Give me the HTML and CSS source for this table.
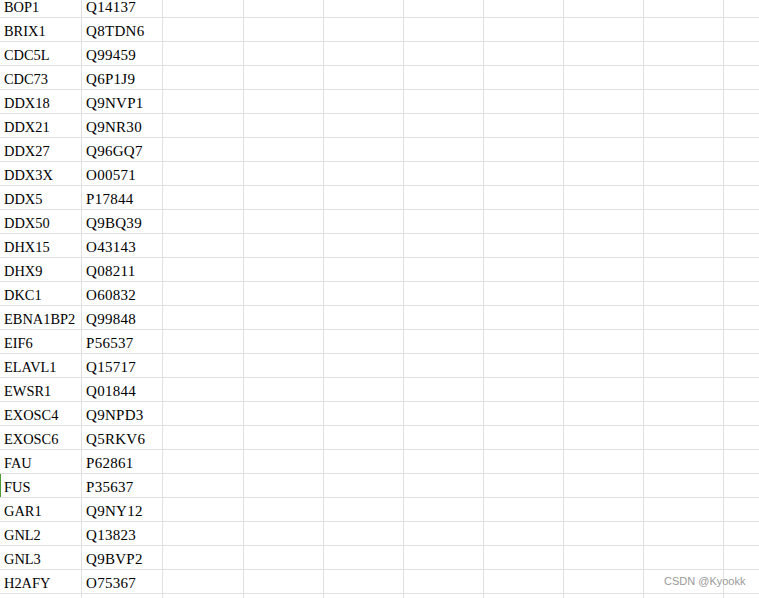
FILE: index.html
```html
<!DOCTYPE html>
<html>
<head>
<meta charset="utf-8">
<link rel="stylesheet" href="styles.css">
</head>
<body>
<div class="sheet">
<table class="grid">
<colgroup>
<col class="c1"><col class="c2"><col class="c2"><col class="c3"><col class="c3"><col class="c3"><col class="c3"><col class="c3"><col class="c3"><col class="c3">
</colgroup>
<tbody>
<tr class="first"><td><span class="gene">BOP1</span></td><td><span class="acc">Q14137</span></td><td></td><td></td><td></td><td></td><td></td><td></td><td></td><td></td></tr>
<tr><td><span class="gene">BRIX1</span></td><td><span class="acc">Q8TDN6</span></td><td></td><td></td><td></td><td></td><td></td><td></td><td></td><td></td></tr>
<tr><td><span class="gene">CDC5L</span></td><td><span class="acc">Q99459</span></td><td></td><td></td><td></td><td></td><td></td><td></td><td></td><td></td></tr>
<tr><td><span class="gene">CDC73</span></td><td><span class="acc">Q6P1J9</span></td><td></td><td></td><td></td><td></td><td></td><td></td><td></td><td></td></tr>
<tr><td><span class="gene">DDX18</span></td><td><span class="acc">Q9NVP1</span></td><td></td><td></td><td></td><td></td><td></td><td></td><td></td><td></td></tr>
<tr><td><span class="gene">DDX21</span></td><td><span class="acc">Q9NR30</span></td><td></td><td></td><td></td><td></td><td></td><td></td><td></td><td></td></tr>
<tr><td><span class="gene">DDX27</span></td><td><span class="acc">Q96GQ7</span></td><td></td><td></td><td></td><td></td><td></td><td></td><td></td><td></td></tr>
<tr><td><span class="gene">DDX3X</span></td><td><span class="acc">O00571</span></td><td></td><td></td><td></td><td></td><td></td><td></td><td></td><td></td></tr>
<tr><td><span class="gene">DDX5</span></td><td><span class="acc">P17844</span></td><td></td><td></td><td></td><td></td><td></td><td></td><td></td><td></td></tr>
<tr><td><span class="gene">DDX50</span></td><td><span class="acc">Q9BQ39</span></td><td></td><td></td><td></td><td></td><td></td><td></td><td></td><td></td></tr>
<tr><td><span class="gene">DHX15</span></td><td><span class="acc">O43143</span></td><td></td><td></td><td></td><td></td><td></td><td></td><td></td><td></td></tr>
<tr><td><span class="gene">DHX9</span></td><td><span class="acc">Q08211</span></td><td></td><td></td><td></td><td></td><td></td><td></td><td></td><td></td></tr>
<tr><td><span class="gene">DKC1</span></td><td><span class="acc">O60832</span></td><td></td><td></td><td></td><td></td><td></td><td></td><td></td><td></td></tr>
<tr><td><span class="gene">EBNA1BP2</span></td><td><span class="acc">Q99848</span></td><td></td><td></td><td></td><td></td><td></td><td></td><td></td><td></td></tr>
<tr><td><span class="gene">EIF6</span></td><td><span class="acc">P56537</span></td><td></td><td></td><td></td><td></td><td></td><td></td><td></td><td></td></tr>
<tr><td><span class="gene">ELAVL1</span></td><td><span class="acc">Q15717</span></td><td></td><td></td><td></td><td></td><td></td><td></td><td></td><td></td></tr>
<tr><td><span class="gene">EWSR1</span></td><td><span class="acc">Q01844</span></td><td></td><td></td><td></td><td></td><td></td><td></td><td></td><td></td></tr>
<tr><td><span class="gene">EXOSC4</span></td><td><span class="acc">Q9NPD3</span></td><td></td><td></td><td></td><td></td><td></td><td></td><td></td><td></td></tr>
<tr><td><span class="gene">EXOSC6</span></td><td><span class="acc">Q5RKV6</span></td><td></td><td></td><td></td><td></td><td></td><td></td><td></td><td></td></tr>
<tr><td><span class="gene">FAU</span></td><td><span class="acc">P62861</span></td><td></td><td></td><td></td><td></td><td></td><td></td><td></td><td></td></tr>
<tr><td class="active"><span class="gene">FUS</span></td><td><span class="acc">P35637</span></td><td></td><td></td><td></td><td></td><td></td><td></td><td></td><td></td></tr>
<tr><td><span class="gene">GAR1</span></td><td><span class="acc">Q9NY12</span></td><td></td><td></td><td></td><td></td><td></td><td></td><td></td><td></td></tr>
<tr><td><span class="gene">GNL2</span></td><td><span class="acc">Q13823</span></td><td></td><td></td><td></td><td></td><td></td><td></td><td></td><td></td></tr>
<tr><td><span class="gene">GNL3</span></td><td><span class="acc">Q9BVP2</span></td><td></td><td></td><td></td><td></td><td></td><td></td><td></td><td></td></tr>
<tr><td><span class="gene">H2AFY</span></td><td><span class="acc">O75367</span></td><td></td><td></td><td></td><td></td><td></td><td></td><td></td><td></td></tr>
<tr><td></td><td></td><td></td><td></td><td></td><td></td><td></td><td></td><td></td><td></td></tr>
</tbody>
</table>
<div class="watermark">CSDN @Kyookk</div>
</div>
</body>
</html>
```
FILE: styles.css
```css
html, body {
  margin: 0;
  padding: 0;
  background: #ffffff;
  overflow: hidden;
}

.sheet {
  position: relative;
  width: 759px;
  height: 598px;
  overflow: hidden;
}

.grid {
  table-layout: fixed;
  border-collapse: separate;
  border-spacing: 0;
  width: 804px;
  font-family: "Liberation Serif", "Times New Roman", serif;
  font-size: 15px;
  color: #000000;
}

.c1 { width: 82px; }
.c2 { width: 81px; }
.c3 { width: 80px; }

.grid td {
  box-sizing: border-box;
  height: 24px;
  padding: 0 0 3px 4px;
  border-right: 1px solid #e1e1e1;
  border-bottom: 1px solid #e1e1e1;
  line-height: 13px;
  vertical-align: bottom;
  white-space: nowrap;
}

.gene,
.acc {
  display: inline-block;
  transform-origin: left center;
}

.gene {
  transform: scaleX(0.96);
}

.acc {
  letter-spacing: 0.3px;
}

.grid tr.first td {
  height: 18px;
}

.grid td.active {
  box-shadow: inset 1px 0 0 #4e9a35;
}

.watermark {
  position: absolute;
  left: 664px;
  top: 575px;
  font-family: "Liberation Sans", Arial, sans-serif;
  font-size: 11px;
  color: #9a9a9a;
  white-space: nowrap;
}
```
